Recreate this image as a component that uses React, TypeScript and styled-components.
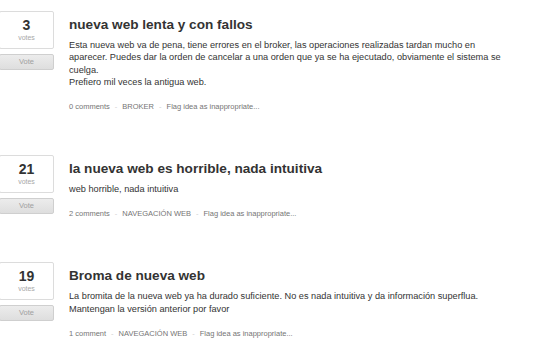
import React from "react";
import styled, { createGlobalStyle } from "styled-components";

const Global = createGlobalStyle`
  html, body { margin: 0; padding: 0; background: #fff; }
  body { font-family: "Liberation Sans", Arial, sans-serif; color: #333; }
`;

const List = styled.div`
  display: flex;
  flex-direction: column;
  padding-top: 11px;
`;

const Item = styled.div`
  display: flex;
  align-items: flex-start;
  gap: 15px;
  padding-bottom: 43px;
  &:last-child { padding-bottom: 0; }
`;

const VoteCol = styled.div`
  display: flex;
  flex-direction: column;
  gap: 5px;
  width: 55px;
  margin-left: -1px;
  flex: none;
`;

const VoteBox = styled.div`
  height: 36px;
  border: 1px solid #dcdcdc;
  border-radius: 2px;
  background: #fff;
  display: flex;
  flex-direction: column;
  align-items: center;
  justify-content: center;
`;

const Count = styled.div`
  font-size: 14px;
  font-weight: bold;
  line-height: 15px;
  color: #333;
`;

const VotesLabel = styled.div`
  font-size: 7px;
  line-height: 9px;
  color: #a8a8a8;
`;

const VoteButton = styled.div`
  height: 14px;
  border: 1px solid #cfcfcf;
  border-radius: 2px;
  background: linear-gradient(#ececec, #dedede);
  color: #a0a0a0;
  font-size: 7.5px;
  line-height: 14px;
  text-align: center;
`;

const Content = styled.div`
  padding-top: 5px;
  display: flex;
  flex-direction: column;
`;

const Title = styled.div`
  font-size: 13.6px;
  font-weight: bold;
  line-height: 18px;
  color: #333;
  white-space: nowrap;
`;

const Body = styled.div`
  margin-top: 5px;
  font-size: 9.2px;
  line-height: 12.3px;
  color: #333;
  white-space: nowrap;
`;

const Meta = styled.div`
  margin-top: 14px;
  font-size: 7.5px;
  line-height: 10px;
  color: #757575;
  display: flex;
  align-items: center;
  white-space: nowrap;
`;

const Sep = styled.span`
  color: #cfcfcf;
  margin: 0 5px;
`;

type Idea = { votes: number; title: string; body: string[]; comments: string; category: string };

const ideas: Idea[] = [
  {
    votes: 3,
    title: "nueva web lenta y con fallos",
    body: [
      "Esta nueva web va de pena, tiene errores en el broker, las operaciones realizadas tardan mucho en",
      "aparecer. Puedes dar la orden de cancelar a una orden que ya se ha ejecutado, obviamente el sistema se",
      "cuelga.",
      "Prefiero mil veces la antigua web.",
    ],
    comments: "0 comments",
    category: "BROKER",
  },
  {
    votes: 21,
    title: "la nueva web es horrible, nada intuitiva",
    body: ["web horrible, nada intuitiva"],
    comments: "2 comments",
    category: "NAVEGACIÓN WEB",
  },
  {
    votes: 19,
    title: "Broma de nueva web",
    body: [
      "La bromita de la nueva web ya ha durado suficiente. No es nada intuitiva y da información superflua.",
      "Mantengan la versión anterior por favor",
    ],
    comments: "1 comment",
    category: "NAVEGACIÓN WEB",
  },
];

export default function App() {
  return (
    <>
      <Global />
      <List>
        {ideas.map((idea, i) => (
          <Item key={i}>
            <VoteCol>
              <VoteBox>
                <Count>{idea.votes}</Count>
                <VotesLabel>votes</VotesLabel>
              </VoteBox>
              <VoteButton>Vote</VoteButton>
            </VoteCol>
            <Content>
              <Title>{idea.title}</Title>
              <Body>
                {idea.body.map((l, j) => (
                  <div key={j}>{l}</div>
                ))}
              </Body>
              <Meta>
                <span>{idea.comments}</span>
                <Sep>-</Sep>
                <span>{idea.category}</span>
                <Sep>-</Sep>
                <span>Flag idea as inappropriate...</span>
              </Meta>
            </Content>
          </Item>
        ))}
      </List>
    </>
  );
}
